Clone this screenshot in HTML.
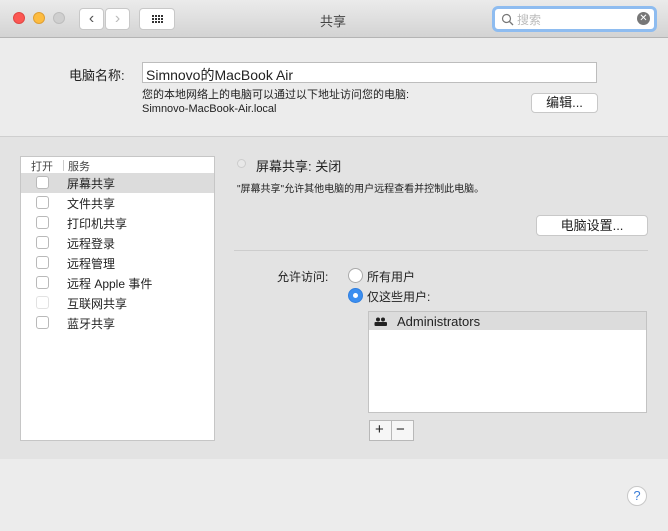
<!DOCTYPE html>
<html><head><meta charset="utf-8"><style>
*{margin:0;padding:0;box-sizing:border-box}
body{width:668px;height:531px;overflow:hidden;font-family:"Liberation Sans","Noto Sans CJK SC",sans-serif;font-size:13px;color:#222;background:#ececec;position:relative}
.a{position:absolute}
.tb{left:0;top:0;width:668px;height:38px;background:linear-gradient(#ebebeb,#d3d3d3);border-bottom:1px solid #b4b4b4}
.dot{width:12px;height:12px;border-radius:50%;top:12px}
.btn{background:#fff;border:1px solid #c8c8c8;border-radius:4px;text-align:center}
.mid{left:0;top:136px;width:668px;height:323px;background:#e3e3e3;border-top:1px solid #cfcfcf}
.cb{width:13px;height:13px;border:1px solid #b9b9b9;border-radius:3px;background:#fff;left:15px}
.row{left:0;width:193px;height:20px}
.row span{position:absolute;left:46px;top:2px;font-size:12px}
</style></head><body>
<div class="a tb">
<div class="a dot" style="left:13px;background:#fc5753;border:1px solid #df4744"></div>
<div class="a dot" style="left:33px;background:#fdbc40;border:1px solid #de9f34"></div>
<div class="a dot" style="left:53px;background:#cfcfcf;border:1px solid #bdbdbd"></div>
<div class="a btn" style="left:79px;top:8px;width:25px;height:22px;font-size:16px;line-height:19px;color:#555">&#8249;</div>
<div class="a btn" style="left:105px;top:8px;width:25px;height:22px;font-size:16px;line-height:19px;color:#bbb">&#8250;</div>
<div class="a btn" style="left:139px;top:8px;width:36px;height:22px">
<svg width="36" height="20" style="position:absolute;left:0;top:0"><g fill="#333"><rect x="12" y="6" width="2" height="2"/><rect x="15" y="6" width="2" height="2"/><rect x="18" y="6" width="2" height="2"/><rect x="21" y="6" width="2" height="2"/><rect x="12" y="9" width="2" height="2"/><rect x="15" y="9" width="2" height="2"/><rect x="18" y="9" width="2" height="2"/><rect x="21" y="9" width="2" height="2"/><rect x="12" y="12" width="2" height="2"/><rect x="15" y="12" width="2" height="2"/><rect x="18" y="12" width="2" height="2"/><rect x="21" y="12" width="2" height="2"/></g></svg></div>
<div class="a" style="left:320px;top:11px;font-size:13px;color:#444">共享</div>
<div class="a" style="left:492px;top:6px;width:165px;height:26px;border-radius:6px;background:#fff;border:3px solid #8ebcf0">
<svg class="a" style="left:6px;top:4px" width="14" height="14"><circle cx="5.5" cy="5.5" r="4" fill="none" stroke="#777" stroke-width="1.2"/><line x1="8.5" y1="8.5" x2="12" y2="12" stroke="#777" stroke-width="1.3"/></svg>
<div class="a" style="left:22px;top:2px;font-size:12px;color:#bbb">搜索</div>
<div class="a" style="left:142px;top:3px;width:13px;height:13px;border-radius:50%;background:#777;color:#fff;font-size:10px;line-height:13px;text-align:center">✕</div>
</div></div>
<div class="a" style="left:69px;top:65px;font-size:13px">电脑名称:</div>
<div class="a" style="left:142px;top:62px;width:455px;height:21px;background:#fff;border:1px solid #bdbdbd;padding:2px 3px;font-size:14px">Simnovo的MacBook Air</div>
<div class="a" style="left:142px;top:88px;font-size:11px;line-height:14px">您的本地网络上的电脑可以通过以下地址访问您的电脑:<br>Simnovo-MacBook-Air.local</div>
<div class="a btn" style="left:531px;top:93px;width:67px;height:20px;font-size:13px;line-height:18px">编辑...</div>
<div class="a mid"></div>
<div class="a" style="left:20px;top:156px;width:195px;height:285px;background:#fff;border:1px solid #c6c6c6">
<div class="a" style="left:10px;top:1px;font-size:11px;color:#444">打开</div>
<div class="a" style="left:42px;top:3px;width:1px;height:11px;background:#ccc"></div>
<div class="a" style="left:47px;top:1px;font-size:11px;color:#444">服务</div>
<div class="a row" style="top:16px;background:#dcdcdc"><div class="a cb" style="top:3px"></div><span>屏幕共享</span></div>
<div class="a row" style="top:36px"><div class="a cb" style="top:3px"></div><span>文件共享</span></div>
<div class="a row" style="top:56px"><div class="a cb" style="top:3px"></div><span>打印机共享</span></div>
<div class="a row" style="top:76px"><div class="a cb" style="top:3px"></div><span>远程登录</span></div>
<div class="a row" style="top:96px"><div class="a cb" style="top:3px"></div><span>远程管理</span></div>
<div class="a row" style="top:116px"><div class="a cb" style="top:3px"></div><span>远程 Apple 事件</span></div>
<div class="a row" style="top:136px"><div class="a cb" style="top:3px;border-color:#e2e2e2"></div><span>互联网共享</span></div>
<div class="a row" style="top:156px"><div class="a cb" style="top:3px"></div><span>蓝牙共享</span></div>
</div>
<div class="a" style="left:237px;top:159px;width:9px;height:9px;border-radius:50%;border:1px solid #ccc;background:#e8e8e8"></div>
<div class="a" style="left:256px;top:156px;font-size:13px">屏幕共享: 关闭</div>
<div class="a" style="left:237px;top:180px;font-size:10px">"屏幕共享"允许其他电脑的用户远程查看并控制此电脑。</div>
<div class="a btn" style="left:536px;top:215px;width:112px;height:21px;font-size:13px;line-height:19px">电脑设置...</div>
<div class="a" style="left:234px;top:250px;width:414px;height:1px;background:#cdcdcd"></div>
<div class="a" style="left:277px;top:268px;font-size:12px">允许访问:</div>
<div class="a" style="left:348px;top:268px;width:15px;height:15px;border-radius:50%;background:#fff;border:1px solid #aaa"></div>
<div class="a" style="left:367px;top:268px;font-size:12px">所有用户</div>
<div class="a" style="left:348px;top:288px;width:15px;height:15px;border-radius:50%;background:#3b8ef0;border:1px solid #2f7fe0"><div class="a" style="left:4px;top:4px;width:5px;height:5px;border-radius:50%;background:#fff"></div></div>
<div class="a" style="left:367px;top:288px;font-size:12px">仅这些用户:</div>
<div class="a" style="left:368px;top:311px;width:279px;height:102px;background:#fff;border:1px solid #c3c3c3">
<div class="a" style="left:0;top:0;width:277px;height:18px;background:#dcdcdc"></div>
<svg class="a" style="left:5px;top:5px" width="14" height="10"><g fill="#222"><circle cx="4" cy="2.5" r="2"/><circle cx="9" cy="2.5" r="2"/><rect x="0.5" y="5" width="7" height="4" rx="1"/><rect x="6" y="5" width="7" height="4" rx="1"/></g></svg>
<div class="a" style="left:28px;top:2px;font-size:13px">Administrators</div>
</div>
<div class="a" style="left:369px;top:420px;width:45px;height:21px;background:#f6f6f6;border:1px solid #b8b8b8;font-size:15px;line-height:18px">
<span class="a" style="left:5px;top:0">+</span><div class="a" style="left:21px;top:0;width:1px;height:19px;background:#b8b8b8"></div><span class="a" style="left:26px;top:0">−</span></div>
<div class="a" style="left:627px;top:486px;width:20px;height:20px;border-radius:50%;background:#fff;border:1px solid #c8c8c8;color:#3b7ed8;font-size:13px;line-height:18px;text-align:center">?</div>
</body></html>
